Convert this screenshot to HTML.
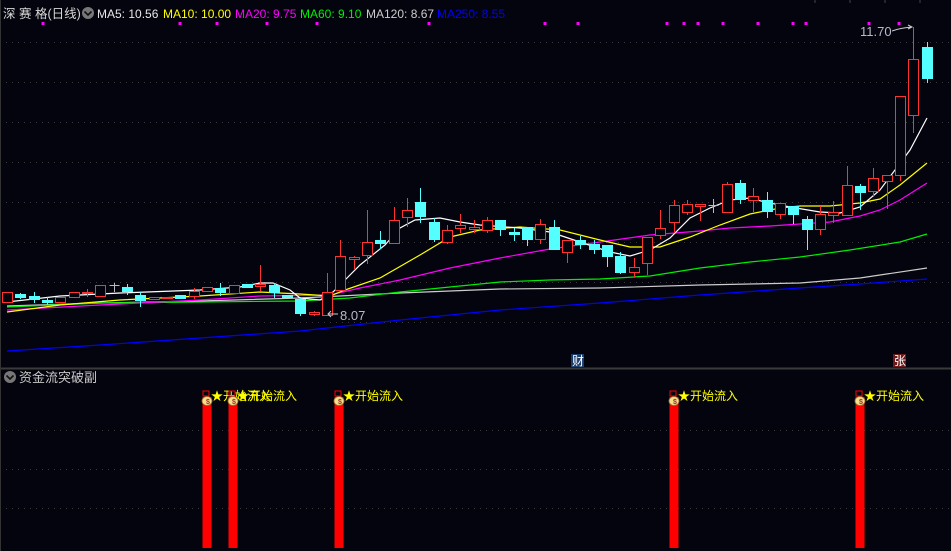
<!DOCTYPE html>
<html><head><meta charset="utf-8"><style>
html,body{margin:0;padding:0;background:#04040e;width:951px;height:551px;overflow:hidden}
svg{display:block}
text{font-family:"Liberation Sans","Noto Sans CJK SC",sans-serif}
</style></head><body>
<svg id="s" width="951" height="551" xmlns="http://www.w3.org/2000/svg">
<rect width="951" height="551" fill="#04040e"/>
<g id="grid"></g>
<line x1="0" y1="368.5" x2="951" y2="368.5" stroke="#3a3a3a" stroke-width="2"/>
<line x1="0.5" y1="0" x2="0.5" y2="551" stroke="#333" stroke-width="1"/>
<g id="ma"></g>
<g id="c"></g>
<g id="dots"></g>
<text x="3" y="18" font-size="12.5" fill="#d8d8d8">深 赛 格(日线)</text>
<circle cx="88" cy="13" r="6" fill="#777"/>
<path d="M84.5 11.5 L88 15 L91.5 11.5" stroke="#111" stroke-width="1.6" fill="none"/>
<text x="97" y="18" font-size="12" fill="#e8e8e8">MA5: 10.56</text>
<text x="163" y="18" font-size="12" fill="#ffff00">MA10: 10.00</text>
<text x="235" y="18" font-size="12" fill="#ff00ff">MA20: 9.75</text>
<text x="300" y="18" font-size="12" fill="#00ee00">MA60: 9.10</text>
<text x="366" y="18" font-size="12" fill="#cccccc">MA120: 8.67</text>
<text x="437" y="18" font-size="12" fill="#0000ff">MA250: 8.55</text>
<text x="340" y="320" font-size="13" fill="#b8b8c8">8.07</text>
<path d="M338 314 L328 314 M331 311 L328 314 L331 317" stroke="#ccc" fill="none"/>
<text x="860" y="36" font-size="13" fill="#b8b8c8">11.70</text>
<path d="M892 31 Q900 28 912 27 M908 25 L912 27 L908 29" stroke="#ccc" fill="none"/>
<rect x="571" y="354" width="13" height="13" fill="#1a3d6e"/>
<text x="572" y="365" font-size="12" fill="#fff">财</text>
<rect x="893" y="354" width="13" height="13" fill="#6e1a1a"/>
<text x="894" y="365" font-size="12" fill="#fff">张</text>
<circle cx="10" cy="377" r="6" fill="#777"/>
<path d="M6.5 375.5 L10 379 L13.5 375.5" stroke="#111" stroke-width="1.6" fill="none"/>
<text x="19" y="382" font-size="13" fill="#c8c8c8">资金流突破副</text>
<g id="bars"></g>
</svg>
<script>
var NS="http://www.w3.org/2000/svg";
function el(p,t,a){var e=document.createElementNS(NS,t);for(var k in a)e.setAttribute(k,a[k]);document.getElementById(p).appendChild(e);return e;}
[42,82,122,162,202,242,282,322,430,469,508].forEach(function(y){el('grid','line',{x1:0,x2:951,y1:y+.5,y2:y+.5,stroke:'#3a3a3a','stroke-dasharray':'1 5'});});
[815,850,885,920].forEach(function(x){el('grid','line',{x1:x,x2:x,y1:0,y2:3,stroke:'#444'});});
var C=[[292,302,292,302,'r'],[294,297,293,298,'c'],[296,299,292,302,'c'],[300,302,297,304,'c'],[297,302,297,302,'r'],[292,297,292,297,'r'],[292,293,289,296,'r'],[285,296,285,296,'r'],[285,285,283,291,'g'],[287,291,284,294,'c'],[295,300,292,306,'c'],[297,299,297,299,'r'],[297,298,297,298,'r'],[295,298,295,298,'c'],[291,296,288,298,'r'],[287,291,287,291,'r'],[288,292,283,295,'c'],[285,293,285,293,'r'],[284,287,284,287,'c'],[284,286,265,290,'r'],[285,292,283,297,'c'],[295,297,295,297,'c'],[299,313,297,315,'c'],[312,314,311,315,'r'],[292,315,273,315,'r'],[256,290,240,290,'r'],[257,259,256,268,'r'],[242,255,210,263,'r'],[240,243,231,248,'c'],[220,243,207,243,'r'],[210,217,198,226,'r'],[202,216,188,222,'c'],[222,239,218,241,'c'],[230,242,225,243,'r'],[225,228,214,232,'r'],[227,229,220,232,'r'],[220,230,217,232,'r'],[220,229,220,235,'c'],[232,234,228,240,'c'],[227,239,227,245,'c'],[224,239,219,243,'r'],[227,249,220,249,'c'],[240,252,240,262,'r'],[240,244,236,248,'c'],[244,249,240,253,'c'],[245,256,245,266,'c'],[256,272,252,273,'c'],[267,272,258,276,'r'],[237,263,237,274,'r'],[228,235,210,238,'r'],[205,222,200,232,'r'],[204,212,200,214,'r'],[204,206,204,220,'r'],[205,205,199,212,'g'],[184,212,182,212,'r'],[183,199,180,203,'c'],[196,200,188,211,'r'],[200,211,192,217,'c'],[203,214,203,218,'r'],[206,214,206,223,'c'],[219,229,216,249,'c'],[214,229,206,234,'r'],[212,215,201,222,'r'],[185,215,166,215,'r'],[186,192,184,209,'c'],[178,191,168,196,'r'],[175,181,175,208,'r'],[96,175,96,180,'r'],[59,115,27,132,'r'],[47,78,42,82,'c']];
C.forEach(function(d,i){var x=Math.round(7+i*13.33)+.5;var col=d[4]=='r'?'#ff3232':d[4]=='c'?'#54ffff':'#bbbbbb';
el('c','line',{x1:x,x2:x,y1:d[2],y2:d[3]+1,stroke:col});
if(d[4]=='g'){el('c','line',{x1:x-5,x2:x+5,y1:d[0]+.5,y2:d[0]+.5,stroke:col});return;}
var h=Math.max(d[1]-d[0],1);
if(d[4]=='r')el('c','rect',{x:x-5,y:d[0]+.5,width:10,height:h,fill:'#04040e',stroke:col});
else el('c','rect',{x:x-5.5,y:d[0],width:11,height:h+1,fill:col});});
var M={'#ffffff':[[7,302],[60,296],[120,293],[200,290],[240,287],[260,283],[273,283],[290,290],[300,298],[320,300],[333,292],[345,280],[360,265],[385,245],[400,228],[415,220],[440,218],[460,222],[480,225],[520,228],[550,232],[565,237],[580,242],[610,252],[630,256],[650,250],[670,238],[690,218],[710,208],[730,200],[750,198],[765,202],[790,207],[820,212],[840,213],[860,207],[880,190],[910,150],[927,118]],
'#ffff00':[[7,312],[60,305],[120,300],[200,296],[260,292],[300,294],[330,296],[345,290],[380,278],[420,255],[450,237],[480,230],[520,227],[560,230],[600,240],[630,247],[660,247],[690,237],[720,225],[750,214],[780,208],[800,206],[830,206],[860,203],[880,199],[900,185],[927,163]],
'#ff00ff':[[7,310],[100,305],[200,300],[260,296],[330,295],[360,288],[400,280],[450,268],[500,258],[550,249],[600,242],[650,235],[700,231],[730,228],[770,226],[830,222],[860,216],[880,210],[900,200],[927,183]],
'#00ee00':[[7,307],[100,303],[200,302],[300,301],[350,298],[400,292],[450,287],[500,282],[550,280],[600,279],[650,276],[700,268],[750,262],[800,257],[850,250],[900,242],[927,234]],
'#cccccc':[[7,306],[100,303],[200,301],[300,298],[400,293],[500,289],[600,288],[700,285],[800,283],[860,278],[927,268]],
'#0000ff':[[7,351],[100,345],[200,338],[300,331],[400,320],[500,310],[600,303],[700,295],[800,288],[860,284],[927,279]]};
['#0000ff','#cccccc','#00ee00','#ff00ff','#ffff00','#ffffff'].forEach(function(c){el('ma','polyline',{points:M[c].map(function(p){return p.join(',')}).join(' '),fill:'none',stroke:c,'stroke-width':1.2});});
[43,180,217,267,317,429,545,578,667,684,698,723,758,793,806,869,899].forEach(function(x){el('dots','rect',{x:x-1.5,y:22,width:3,height:3,fill:'#ff00ff'});});
[207,233,339,674,860].forEach(function(x){
el('bars','rect',{x:x-4.5,y:397,width:9,height:151,fill:'#ff0000'});
el('bars','rect',{x:x-4,y:391,width:6,height:5,fill:'none',stroke:'#ff0000'});
el('bars','ellipse',{cx:x,cy:401,rx:5,ry:4.5,fill:'#f4e08a',stroke:'#a07030','stroke-width':.8});
var t=el('bars','text',{x:x-1,y:404,'font-size':7,fill:'#a03030','font-weight':'bold'});t.textContent='$';
var s=el('bars','text',{x:x+4,y:400,'font-size':12,fill:'#ffff00'});s.textContent='★开始流入';});
</script>
</body></html>
